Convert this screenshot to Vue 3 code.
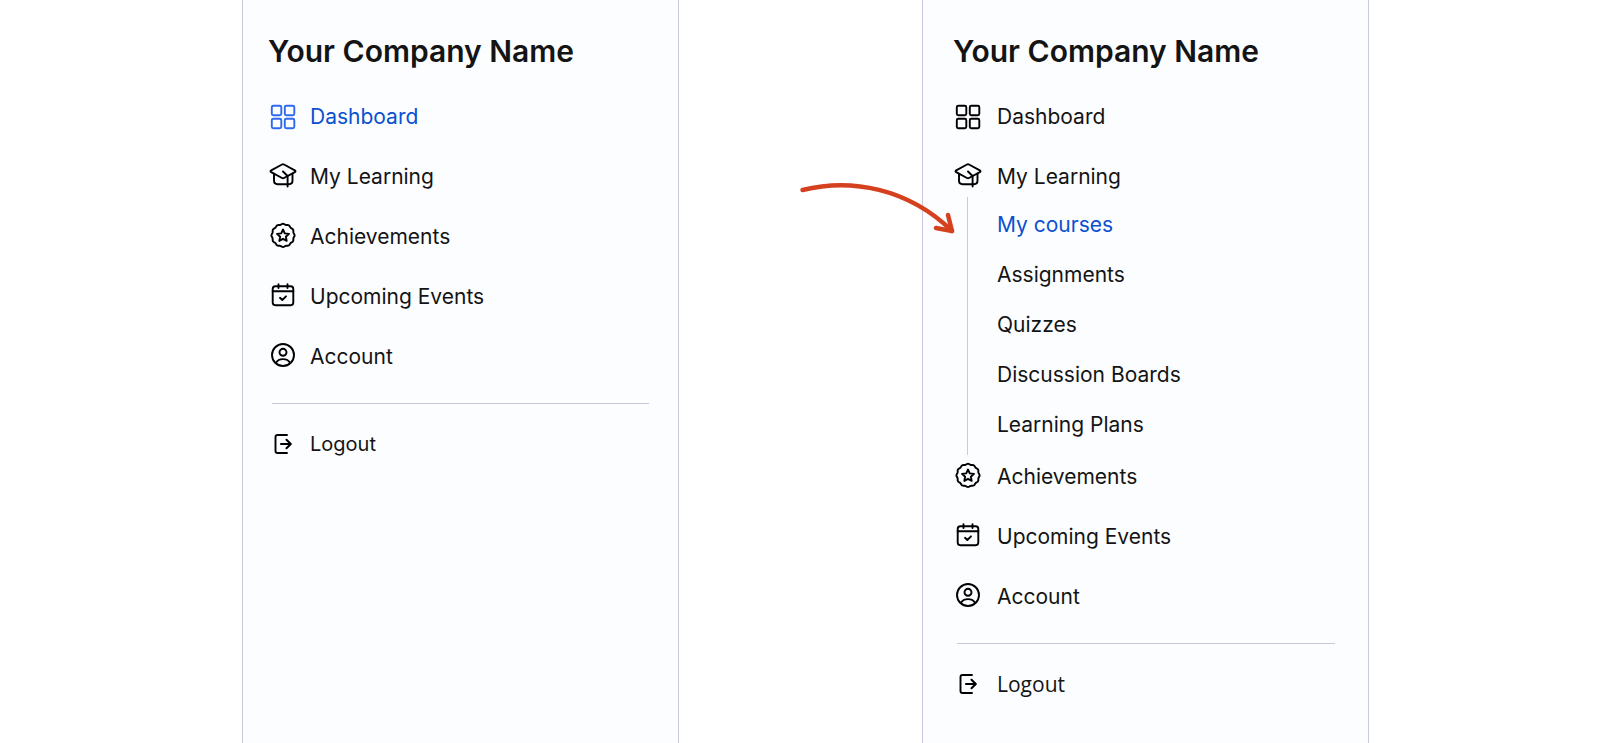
<template>
  <main class="page">
    <aside
      v-for="panel in panels"
      :key="panel.id"
      class="sidebar"
      :class="'sidebar-' + panel.id"
    >
      <h1 class="company">Your Company Name</h1>

      <nav :aria-label="panel.label">
        <ul class="menu">
          <li v-for="item in items" :key="item.name" class="menu-item">
            <a href="#" class="menu-link" :class="{ active: item.name === panel.active }">
              <svg class="icon" viewBox="0 0 28 28" aria-hidden="true">
                <path v-for="(d, i) in item.icon" :key="i" :d="d" />
              </svg>
              <span>{{ item.name }}</span>
            </a>
            <ul v-if="item.name === panel.open" class="submenu">
              <li v-for="sub in courses" :key="sub">
                <a href="#" class="submenu-link" :class="{ active: sub === panel.active }">{{ sub }}</a>
              </li>
            </ul>
          </li>
        </ul>
      </nav>

      <hr class="divider">

      <button type="button" class="menu-link logout">
        <svg class="icon" viewBox="0 0 28 28" aria-hidden="true">
          <path d="M18 5H8.500Q6.500 5 6.500 7V21Q6.500 23 8.500 23H18" />
          <path class="bold" d="M12 14H21.500M17.500 9.800L21.800 14L17.500 18.200" />
        </svg>
        <span>Logout</span>
      </button>
    </aside>

    <div class="between">
      <svg class="arrow" viewBox="0 0 164 64" aria-hidden="true">
        <path d="M6.500 14C55 2 112 12 156 55" />
        <path d="M152 39L156 55L140 52" />
      </svg>
    </div>
  </main>
</template>

<script setup>
import { ref } from 'vue'

const panels = ref([
  { id: 'closed', label: 'Main menu', active: 'Dashboard', open: '' },
  { id: 'open', label: 'Expanded menu', active: 'My courses', open: 'My Learning' }
])

const courses = ['My courses', 'Assignments', 'Quizzes', 'Discussion Boards', 'Learning Plans']

// * Wavy outline of the badge
const badgePath = () => {
  const points = []
  for (let i = 0; i <= 120; i++) {
    const a = (i / 120) * Math.PI * 2
    const r = 11.2 + 0.4 * Math.cos(a * 12)
    points.push((14 + r * Math.sin(a)).toFixed(2) + ' ' + (13.4 - r * Math.cos(a)).toFixed(2))
  }
  return 'M' + points.join('L') + 'Z'
}

const starPath = () => {
  const points = []
  for (let i = 0; i < 10; i++) {
    const a = (i / 10) * Math.PI * 2
    const r = i % 2 === 0 ? 6.3 : 3
    points.push((14 + r * Math.sin(a)).toFixed(2) + ' ' + (13.8 - r * Math.cos(a)).toFixed(2))
  }
  return 'M' + points.join('L') + 'Z'
}

const square = (x, y) =>
  `M${x + 1.5} ${y}h6.500q1.500 0 1.500 1.500v6.500q0 1.500 -1.500 1.500h-6.500q-1.500 0 -1.500 -1.500v-6.500q0 -1.500 1.500 -1.500z`

const items = [
  {
    name: 'Dashboard',
    icon: [square(2.8, 3.8), square(15.8, 3.8), square(2.8, 16.8), square(15.8, 16.8)]
  },
  {
    name: 'My Learning',
    icon: [
      'M13 2.500Q14 2 15 2.500L25.800 8.300Q27.200 9.200 25.800 10.100L15 16Q14 16.500 13 16L2.200 10.100Q0.800 9.200 2.200 8.300Z',
      'M5 11.800V18.500Q5 22.200 8.700 22.200H20Q23.500 22.200 23.500 18.500V11.800',
      'M14 9.500L18.600 14V24.500'
    ]
  },
  { name: 'Achievements', icon: [badgePath(), starPath()] },
  {
    name: 'Upcoming Events',
    icon: [
      'M6.300 4.300H21.700Q24.300 4.300 24.300 6.900V20.600Q24.300 23.200 21.700 23.200H6.300Q3.700 23.200 3.700 20.600V6.900Q3.700 4.300 6.300 4.300Z',
      'M3.700 9.300H24.300M9.500 2.300V6M18.500 2.300V6',
      'M11 15.800L13.300 18L17 14.300'
    ]
  },
  {
    name: 'Account',
    icon: [
      'M25 13A11 11 0 1 1 3 13A11 11 0 1 1 25 13Z',
      'M17.500 10.300A3.500 3.500 0 1 1 10.500 10.300A3.500 3.500 0 1 1 17.500 10.300Z',
      'M6.800 21Q9 17.100 14 17.100Q19 17.100 21.200 21'
    ]
  }
]
</script>

<style>
body {
  margin: 0;
  background-color: #ffffff;
}
</style>

<style scoped>
.page {
  display: grid;
  grid-template-columns: 242fr 437fr 243fr 447fr 231fr;
  min-height: 100vh;
  font-family: Inter, sans-serif;
  color: #141414;
}

.sidebar {
  box-sizing: border-box;
  grid-row: 1;
  grid-column: 2;
  padding: 30px 29px 30px 25px;
  border-left: 1px solid #c9c8e0;
  border-right: 1px solid #c9c8e0;
  background-color: #fcfdff;
}

.sidebar-open {
  grid-column: 4;
  padding-right: 33px;
  padding-left: 30px;
}

.company {
  margin: 0 0 14px;
  font-size: 30px;
  font-weight: 600;
  line-height: 42px;
  white-space: nowrap;
}

.menu,
.submenu {
  margin: 0;
  padding: 0;
  list-style: none;
}

.menu {
  padding: 10px 0 0 1px;
}

.menu-item + .menu-item {
  margin-top: 20px;
}

.menu-item:has(.submenu) + .menu-item {
  margin-top: 0;
}

.menu-link {
  display: flex;
  align-items: center;
  gap: 13px;
  height: 40px;
  font-size: 21px;
  color: inherit;
  text-decoration: none;
  white-space: nowrap;
}

.sidebar-open .menu-link {
  gap: 15px;
}

.active {
  color: #0a50d0;
}

.active .icon {
  color: #2f69ee;
}

.icon {
  flex: none;
  width: 28px;
  height: 28px;
  color: #000000;
  fill: none;
  stroke: currentColor;
  stroke-width: 1.9;
  stroke-linecap: round;
  stroke-linejoin: round;
}

.bold {
  stroke-width: 2.1;
}

.submenu {
  margin: 1px 0 1px 13px;
  padding: 3px 0 5px 29px;
  border-left: 1px solid #c9c8e0;
}

.submenu-link {
  display: block;
  font-size: 21px;
  line-height: 50px;
  color: inherit;
  text-decoration: none;
  white-space: nowrap;
}

.submenu-link.active {
  color: #0a50d0;
}

.divider {
  margin: 27px 0 20px 4px;
  border: 0;
  border-top: 1px solid #c8c8dc;
}

.logout {
  padding: 0 0 0 1px;
  border: 0;
  background: none;
  font-family: inherit;
  font-size: 20px;
  cursor: pointer;
}

.sidebar-open .logout {
  font-family: "Open Sans", sans-serif;
  font-size: 21px;
}

.between {
  position: relative;
  grid-row: 1;
  grid-column: 3;
}

.arrow {
  position: absolute;
  top: 176px;
  right: -38px;
  width: 164px;
  height: 64px;
  fill: none;
  stroke: #d5401f;
  stroke-width: 4.5;
  stroke-linecap: round;
  stroke-linejoin: round;
}
</style>
